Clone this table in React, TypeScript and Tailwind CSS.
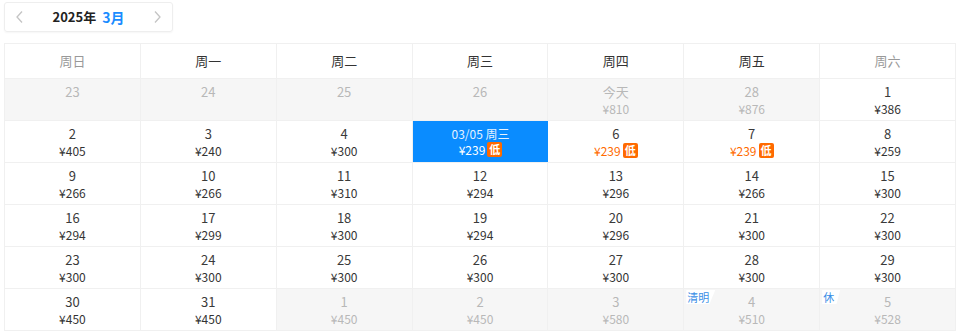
import React from 'react'

type Cell = {
  day: string
  price?: string
  past?: boolean
  low?: boolean
  selected?: boolean
  tag?: string
  dim?: boolean
}

const weeks: Cell[][] = [
  [
    { day: '23', past: true },
    { day: '24', past: true },
    { day: '25', past: true },
    { day: '26', past: true },
    { day: '今天', price: '¥810', past: true },
    { day: '28', price: '¥876', past: true },
    { day: '1', price: '¥386' },
  ],
  [
    { day: '2', price: '¥405' },
    { day: '3', price: '¥240' },
    { day: '4', price: '¥300' },
    { day: '03/05 周三', price: '¥239', low: true, selected: true },
    { day: '6', price: '¥239', low: true },
    { day: '7', price: '¥239', low: true },
    { day: '8', price: '¥259' },
  ],
  [
    { day: '9', price: '¥266' },
    { day: '10', price: '¥266' },
    { day: '11', price: '¥310' },
    { day: '12', price: '¥294' },
    { day: '13', price: '¥296' },
    { day: '14', price: '¥266' },
    { day: '15', price: '¥300' },
  ],
  [
    { day: '16', price: '¥294' },
    { day: '17', price: '¥299' },
    { day: '18', price: '¥300' },
    { day: '19', price: '¥294' },
    { day: '20', price: '¥296' },
    { day: '21', price: '¥300' },
    { day: '22', price: '¥300' },
  ],
  [
    { day: '23', price: '¥300' },
    { day: '24', price: '¥300' },
    { day: '25', price: '¥300' },
    { day: '26', price: '¥300' },
    { day: '27', price: '¥300' },
    { day: '28', price: '¥300' },
    { day: '29', price: '¥300' },
  ],
  [
    { day: '30', price: '¥450' },
    { day: '31', price: '¥450' },
    { day: '1', price: '¥450', dim: true },
    { day: '2', price: '¥450', dim: true },
    { day: '3', price: '¥580', dim: true },
    { day: '4', price: '¥510', dim: true, tag: '清明' },
    { day: '5', price: '¥528', dim: true, tag: '休' },
  ],
]

const heads = ['周日', '周一', '周二', '周三', '周四', '周五', '周六']

const LowBadge = () => (
  <span className='ml-[2px] inline-flex h-[15px] items-center rounded-[2px] bg-[#ff6a00] px-[2px] text-[11px] font-bold leading-none text-white'>低</span>
)

const DayCell = ({ c }: { c: Cell }) => {
  if (c.selected) {
    return (
      <div className='flex h-[42px] flex-col items-center justify-center border-b border-[#f0f0f0] bg-[#0a8cff] leading-[16px] text-white'>
        <span className='text-[12px] text-[#e6f2ff]'>{c.day}</span>
        <span className='flex items-center text-[12px]'>{c.price}<LowBadge /></span>
      </div>
    )
  }
  const grey = c.past || c.dim
  return (
    <div className={`relative flex h-[42px] flex-col items-center justify-center border-r border-b border-[#f0f0f0] leading-[17px] ${grey ? 'bg-[#f6f6f6]' : 'bg-white'}`}>
      {c.tag && (
        <span className='absolute left-[2px] top-[1px] bg-white pl-[1px] pr-[6px] text-[11px] leading-[14px] text-[#3a8ee6] [clip-path:polygon(0_0,100%_0,80%_100%,0_100%)]'>{c.tag}</span>
      )}
      <span className={`text-[13px] ${grey ? 'text-[#b8b8b8]' : 'text-[#3a3a3a]'}`}>{c.day}</span>
      {c.price && (
        <span className={`flex items-center text-[12px] ${grey ? 'text-[#b8b8b8]' : c.low ? 'text-[#ff6a00]' : 'text-[#333]'}`}>
          {c.price}
          {c.low && <LowBadge />}
        </span>
      )}
      {!c.price && <span className='h-[17px]' />}
    </div>
  )
}

export default function App() {
  return (
    <div className='h-[336px] w-[960px] bg-white pt-[2px] pl-[4px]' style={{ fontFamily: '"Noto Sans CJK SC", "Noto Sans", sans-serif' }}>
      <div className='flex h-[30px] w-[169px] items-center justify-between rounded-[3px] border border-[#eeeeee] px-[10px] shadow-[0_1px_2px_rgba(0,0,0,0.04)]'>
        <svg width='10' height='14' viewBox='0 0 10 14' fill='none' stroke='#c4c4c4' strokeWidth='1.3'>
          <path d='M7 1.5 L2 7 L7 12.5' />
        </svg>
        <div className='flex items-center gap-[6px] text-[13px] font-bold'>
          <span className='text-[#222]'>2025年</span>
          <span className='text-[#1a8cff] text-[14px]'>3月</span>
        </div>
        <svg width='10' height='14' viewBox='0 0 10 14' fill='none' stroke='#c4c4c4' strokeWidth='1.3'>
          <path d='M3 1.5 L8 7 L3 12.5' />
        </svg>
      </div>
      <div className='mt-[11px] w-[952px] border-l border-t border-[#f0f0f0]'>
        <div className='grid grid-cols-7'>
          {heads.map((h, i) => (
            <div key={h} className={`flex h-[35px] items-center justify-center border-r border-b border-[#f0f0f0] text-[13px] ${i === 0 || i === 6 ? 'text-[#999]' : 'text-[#333]'}`}>{h}</div>
          ))}
        </div>
        {weeks.map((w, wi) => (
          <div key={wi} className='grid grid-cols-7'>
            {w.map((c, ci) => (
              <DayCell key={ci} c={c} />
            ))}
          </div>
        ))}
      </div>
    </div>
  )
}
